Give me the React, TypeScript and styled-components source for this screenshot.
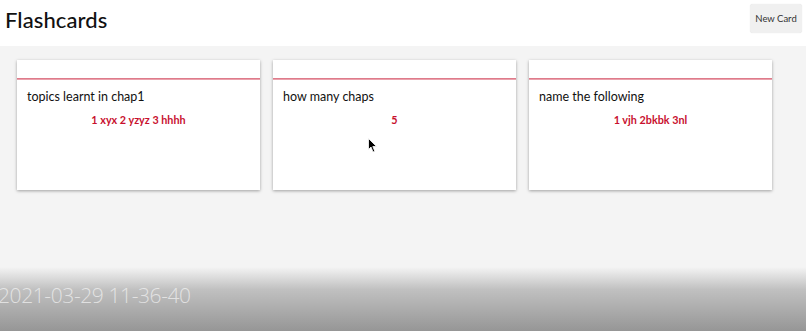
import styled, { createGlobalStyle } from "styled-components";

const GlobalStyle = createGlobalStyle`
  html, body {
    margin: 0;
    padding: 0;
    height: 100%;
    background: #f4f4f4;
  }
  #root {
    min-height: 100vh;
  }
`;

const Page = styled.div`
  position: relative;
  height: 331px;
  overflow: hidden;
  background: #f4f4f4;
  font-family: Lato, "Noto Sans", sans-serif;
`;

const Header = styled.header`
  display: flex;
  align-items: flex-start;
  justify-content: space-between;
  height: 46px;
  background: #ffffff;
  padding: 4px 4px 0 5px;
  box-sizing: border-box;
`;

const Title = styled.h1`
  margin: 2px 0 0;
  font-size: 22px;
  font-weight: 500;
  color: #111;
  letter-spacing: 0.1px;
`;

const NewCardBtn = styled.button`
  width: 52px;
  height: 29px;
  border: none;
  border-radius: 3px;
  background: #f0f0f0;
  box-shadow: 0 0 1px rgba(0, 0, 0, 0.15);
  font-family: inherit;
  font-size: 9.5px;
  color: #333;
  padding: 0;
  cursor: pointer;
`;

const CardGrid = styled.div`
  display: flex;
  gap: 13px;
  padding: 14px 17px;
`;

const Card = styled.div`
  width: 243px;
  height: 130px;
  background: #fff;
  box-shadow: 0 1px 3px rgba(0, 0, 0, 0.35);
  display: flex;
  flex-direction: column;
`;

const CardTop = styled.div`
  height: 18px;
`;

const Divider = styled.div`
  height: 2px;
  background: linear-gradient(to bottom, #d9687a, #f0b4bd);
`;

const Question = styled.div`
  padding: 9px 10px 0;
  font-size: 12.5px;
  color: #111;
`;

const Answer = styled.div`
  margin-top: 9px;
  text-align: center;
  font-size: 10.8px;
  font-weight: 700;
  color: #c8102e;
`;

const Overlay = styled.div`
  position: absolute;
  left: 0;
  right: 0;
  bottom: 0;
  height: 64px;
  background: linear-gradient(
    to bottom,
    rgba(150, 150, 150, 0) 0%,
    rgba(150, 150, 150, 0.55) 35%,
    rgba(150, 150, 150, 1) 100%
  );
  pointer-events: none;
`;

const Stamp = styled.div`
  position: absolute;
  left: -2px;
  top: 14px;
  font-family: "Open Sans", sans-serif;
  font-weight: 300;
  font-size: 21px;
  color: rgba(255, 255, 255, 0.6);
  letter-spacing: -0.4px;
`;

const Cursor = styled.svg`
  position: absolute;
  left: 368px;
  top: 138px;
  width: 10px;
  height: 15px;
`;

const cards = [
  { q: "topics learnt in chap1", a: "1 xyx 2 yzyz 3 hhhh" },
  { q: "how many chaps", a: "5" },
  { q: "name the following", a: "1 vjh 2bkbk 3nl" },
];

export default function App() {
  return (
    <Page>
      <GlobalStyle />
      <Header>
        <Title>Flashcards</Title>
        <NewCardBtn>New Card</NewCardBtn>
      </Header>
      <CardGrid>
        {cards.map((c) => (
          <Card key={c.q}>
            <CardTop />
            <Divider />
            <Question>{c.q}</Question>
            <Answer>{c.a}</Answer>
          </Card>
        ))}
      </CardGrid>
      <Cursor viewBox="0 0 10 15">
        <path d="M0.5 0.5 L0.5 11.5 L3 9 L5 14 L6.8 13.2 L4.8 8.5 L8.5 8.5 Z" fill="#000" stroke="#fff" strokeWidth="0.8" />
      </Cursor>
      <Overlay>
        <Stamp>2021-03-29 11-36-40</Stamp>
      </Overlay>
    </Page>
  );
}
